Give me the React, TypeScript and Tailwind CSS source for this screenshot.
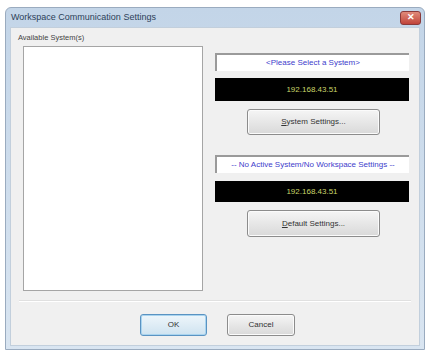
const ui = { fontFamily: '"Liberation Sans", Arial, sans-serif' };

function DialogButton({ label, accel, primary }: { label: string; accel?: number; primary?: boolean }) {
  const text =
    accel === undefined ? (
      label
    ) : (
      <>
        {label.slice(0, accel)}
        <span className="underline">{label[accel]}</span>
        {label.slice(accel + 1)}
      </>
    );
  return (
    <div
      className={`flex items-center justify-center rounded-[3px] border text-[8px] text-[#333] ${
        primary
          ? "border-[#5a93c2] bg-gradient-to-b from-[#eef6fb] to-[#cfe3f0] shadow-[inset_0_0_0_1px_#a9d4ef]"
          : "border-[#8c8c8c] bg-gradient-to-b from-[#f5f5f5] to-[#d9d9d9] shadow-[inset_0_0_0_1px_#fbfbfb]"
      }`}
    >
      {text}
    </div>
  );
}

function StatusField({ text }: { text: string }) {
  return (
    <div className="flex h-[18px] items-center justify-center border-l-2 border-t-2 border-[#9a9a9a] bg-white text-[8px] text-[#4040cc]">
      {text}
    </div>
  );
}

function AddressBox({ className }: { className: string }) {
  return (
    <div className={`flex items-center justify-center bg-black text-[8px] text-[#c9d46a] ${className}`}>
      192.168.43.51
    </div>
  );
}

export default function App() {
  return (
    <div className="h-[353px] w-[429px] bg-white pl-[5px] pt-[7px]" style={ui}>
      <div className="flex h-[343px] w-[420px] flex-col rounded-t-[6px] border border-[#9aabbf] bg-gradient-to-b from-[#c3d5e8] to-[#d9e5f1]">
        {/* title bar */}
        <div className="flex h-[19px] items-center justify-between pl-[5px] pr-[3px]">
          <span className="text-[9px] text-[#2c3f58]">Workspace Communication Settings</span>
          <div className="flex h-[14px] w-[21px] items-center justify-center rounded-[3px] border border-[#8a3a3a] bg-gradient-to-b from-[#e08a7a] to-[#c0433a] text-[9px] font-bold leading-none text-white">
            ✕
          </div>
        </div>

        {/* client area */}
        <div className="mx-[4px] mb-[3px] flex flex-1 flex-col border border-[#c2cfdc] bg-[#f0f0f0]">
          <div className="flex">
            <div className="flex flex-col pl-[7px] pt-[5px]">
              <span className="h-[10px] text-[7.5px] leading-[10px] text-[#444]">Available System(s)</span>
              <div className="ml-[5px] mt-[3px] h-[245px] w-[180px] border border-[#a5a5a5] bg-white" />
            </div>

            <div className="ml-[12px] flex w-[194px] flex-col pt-[25px]">
              <StatusField text="<Please Select a System>" />
              <AddressBox className="mt-[7px] h-[23px]" />
              <div className="ml-[32px] mt-[8px] flex h-[26px] w-[133px]">
                <div className="flex-1 [&>div]:h-full">
                  <DialogButton label="System Settings..." accel={0} />
                </div>
              </div>

              <div className="mt-[20px]">
                <StatusField text="-- No Active System/No Workspace Settings --" />
              </div>
              <AddressBox className="mt-[8px] h-[21px]" />
              <div className="ml-[32px] mt-[8px] flex h-[27px] w-[133px]">
                <div className="flex-1 [&>div]:h-full">
                  <DialogButton label="Default Settings..." accel={0} />
                </div>
              </div>
            </div>
          </div>

          <div className="mx-[8px] mt-[9px] border-b border-t border-b-white border-t-[#e0e0e0]" />

          <div className="mt-[12px] flex gap-[20px] pl-[129px]">
            <div className="h-[22px] w-[67px] [&>div]:h-full">
              <DialogButton label="OK" primary />
            </div>
            <div className="h-[22px] w-[68px] [&>div]:h-full">
              <DialogButton label="Cancel" />
            </div>
          </div>
        </div>
      </div>
    </div>
  );
}
